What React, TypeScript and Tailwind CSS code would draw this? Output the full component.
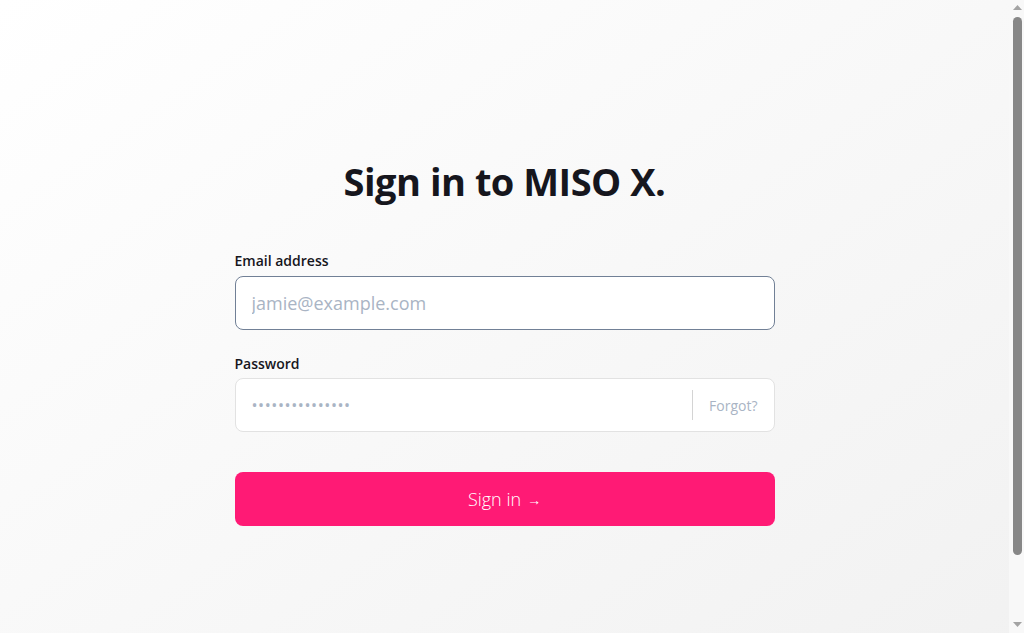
import React from 'react';

const font = { fontFamily: '"Open Sans", "Noto Sans", sans-serif' };

function Scrollbar() {
  return (
    <div className="flex h-full w-[15px] shrink-0 flex-col items-center bg-[#f8f8f8] pl-[1px]">
      <svg className="mt-[5px]" width="9" height="5" viewBox="0 0 9 5">
        <path d="M4.5 0L9 5H0z" fill="#a3a3a3" />
      </svg>
      <div className="mt-[7px] h-[538px] w-[9px] rounded-full bg-[#878787]" />
      <div className="flex-1" />
      <svg className="mb-[6px]" width="9" height="5" viewBox="0 0 9 5">
        <path d="M0 0H9L4.5 5z" fill="#a3a3a3" />
      </svg>
    </div>
  );
}

export default function App() {
  return (
    <div className="flex h-screen w-full overflow-hidden" style={font}>
      <div className="h-full flex-1 overflow-y-auto [scrollbar-width:none]">
        <div className="min-h-[706px] w-full bg-gradient-to-br from-white to-[#f1f1f1] text-[#16161d]">
          <div className="mx-auto w-[540px] pt-[153px] pb-[180px]">
            <h1 className="text-center text-[38px] font-bold leading-[56px] tracking-[-0.5px] text-[#16161d]">
              Sign in to MISO X.
            </h1>

            <form className="mt-[42px]" onSubmit={(e) => e.preventDefault()}>
              <label className="block text-[14px] font-semibold leading-5 text-[#16161d]">
                Email address
              </label>
              <input
                type="email"
                autoFocus
                placeholder="jamie@example.com"
                className="mt-[5px] block h-[54px] w-full rounded-lg border border-[#718096] bg-white px-4 text-[18px] text-[#2d3748] outline-none placeholder:text-[#a9b4c4]"
              />

              <label className="mt-[24px] block text-[14px] font-semibold leading-5 text-[#16161d]">
                Password
              </label>
              <div className="mt-[4px] flex h-[54px] w-full items-center rounded-lg border border-[#e2e2e2] bg-white">
                <input
                  type="password"
                  placeholder="•••••••••••••••"
                  className="h-full min-w-0 flex-1 rounded-l-lg bg-transparent px-4 text-[16px] tracking-[0.6px] outline-none placeholder:text-[#a9b4c4]"
                />
                <div className="h-[30px] w-px bg-[#d4d4d4]" />
                <button type="button" className="px-4 text-[14px] text-[#a9b4c4]">
                  Forgot?
                </button>
              </div>

              <button
                type="submit"
                className="mt-10 flex h-[54px] w-full items-center justify-center rounded-lg bg-[#ff1a75] text-[18px] font-light text-white"
              >
                Sign in <span className="ml-1.5 text-[14px]">→</span>
              </button>
            </form>
          </div>
        </div>
      </div>
      <Scrollbar />
    </div>
  );
}
